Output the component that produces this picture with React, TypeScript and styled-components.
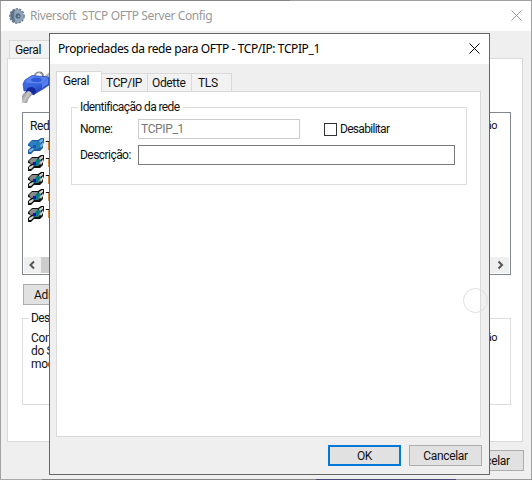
import React from "react";
import styled, { createGlobalStyle } from "styled-components";

const Global = createGlobalStyle`
  * { box-sizing: border-box; }
  html, body { margin: 0; width: 532px; height: 480px; overflow: hidden; background: #efefef; }
`;

const Window = styled.div`
  position: relative;
  width: 532px;
  height: 480px;
  overflow: hidden;
  border: 1px solid transparent;
  background:
    linear-gradient(#efefef, #efefef) padding-box,
    linear-gradient(90deg, #aaa 42px, #858585 42px, #858585 316px, #4a4878 316px, #4a4878 456px, #999 456px) 0 100% / 100% 1px no-repeat border-box,
    linear-gradient(90deg, #858585 290px, #a0a0a0 290px) 0 0 / 100% 1px no-repeat border-box,
    linear-gradient(#a3a3a3, #a3a3a3) border-box;
  color: #111;
  font: 12px/14px Roboto, sans-serif;
  letter-spacing: -0.35px;
  white-space: nowrap;
`;

const TitleBar = styled.header<{ $inactive?: boolean }>`
  display: flex;
  align-items: center;
  height: 30px;
  padding: 0 9px 0 8px;
  background: #fff;
  color: ${(p) => (p.$inactive ? "#999" : "#000")};
  font: 12px/16px "Noto Sans", sans-serif;
`;

const Title = styled.span`
  flex: 1;
  white-space: pre;
  letter-spacing: -0.4px;
`;

const AppIcon = styled.svg`
  width: 16px;
  height: 16px;
  margin-right: 5px;
`;

const Cross = styled.svg`
  width: 11px;
  height: 11px;
  margin-bottom: 1px;
`;

const MainBody = styled.div`
  padding: 9px 8px 0 6px;
`;

const TabRow = styled.div`
  display: flex;
  align-items: flex-end;
`;

const MainTab = styled.div`
  width: 60px;
  height: 18px;
  margin-left: 2px;
  padding: 2px 0 0 5px;
  border: 1px solid #d9d9d9;
  border-bottom: 0;
  background: #f2f2f2;
`;

const MainPanel = styled.section`
  height: 384px;
  padding: 12px 11px 0 14px;
  border: 1px solid #d9d9d9;
  background: #fff;
`;

const PlugPicture = styled.svg`
  display: block;
  width: 32px;
  height: 32px;
`;

const ListBox = styled.div`
  display: flex;
  flex-direction: column;
  height: 163px;
  margin-top: 9px;
  border: 1px solid #828790;
`;

const ListHeader = styled.div`
  display: flex;
  justify-content: space-between;
  padding: 6px 13px 4px 7px;
`;

const ListRow = styled.div`
  display: flex;
  align-items: center;
  height: 17px;
  padding-left: 5px;
`;

const RowIcon = styled.svg`
  width: 16px;
  height: 16px;
`;

const RowName = styled.span<{ $selected?: boolean }>`
  height: 17px;
  padding: 2px 2px 0;
  text-indent: -0.5px;
  background: ${(p) => (p.$selected ? "#efefef" : "transparent")};
`;

const NarrowText = styled.span`
  font-size: 11px;
  letter-spacing: -0.5px;
`;

const ScrollBar = styled.div`
  display: flex;
  align-items: center;
  height: 16px;
  margin: auto 1px 1px;
  background: #efefef;
`;

const ScrollArrow = styled.svg`
  width: 17px;
  height: 16px;
`;

const Thumb = styled.div`
  width: 400px;
  height: 16px;
  margin-right: auto;
  background: #cdcdcd;
`;

const Button = styled.button<{ $primary?: boolean }>`
  width: 73px;
  height: 21px;
  padding: 0;
  border: ${(p) => (p.$primary ? "2px solid #0078d7" : "1px solid #adadad")};
  background: #e1e1e1;
  color: #111;
  font: inherit;
  letter-spacing: inherit;
`;

const AddButton = styled(Button)`
  display: block;
  margin: 9px 0 0 1px;
  padding: 0 0 0 10px;
  text-align: left;
`;

const Group = styled.fieldset<{ $height: number }>`
  height: ${(p) => p.$height}px;
  min-width: 0;
  margin: 0;
  padding: 0 8px;
  border: 1px solid #dcdcdc;
`;

const Legend = styled.legend`
  height: 14px;
  margin-left: -2px;
  padding: 0 3px 0 2px;
  letter-spacing: -0.6px;
`;

const DescriptionGroup = styled(Group)`
  margin-top: 6px;
`;

const DescriptionLine = styled.div`
  display: flex;
  justify-content: space-between;
  height: 13px;
  padding-right: 5px;
`;

const DescriptionText = styled.div`
  padding-top: 6px;
`;

const MainFooter = styled.div`
  display: flex;
  justify-content: flex-end;
  padding-top: 8px;
  margin-right: -1px;
`;

const Dialog = styled.div`
  position: absolute;
  left: 48px;
  top: 32px;
  width: 441px;
  height: 442px;
  border: 1px solid #666;
  background: #efefef;
`;

const DialogBody = styled.div`
  padding: 7px 8px 0 6px;
`;

const DialogTabs = styled.div`
  display: flex;
  align-items: flex-end;
  height: 20px;
`;

const Tab = styled.div<{ $width: number; $active?: boolean }>`
  width: ${(p) => p.$width}px;
  height: ${(p) => (p.$active ? 21 : 18)}px;
  margin-bottom: ${(p) => (p.$active ? -1 : 0)}px;
  padding: ${(p) => (p.$active ? "2px 0 0 6px" : "2px 0 0 4px")};
  border: solid #d9d9d9;
  border-width: ${(p) => (p.$active ? "1px 1px 0 1px" : "1px 1px 0 0")};
  background: ${(p) => (p.$active ? "#fff" : "#f2f2f2")};
  z-index: ${(p) => (p.$active ? 1 : 0)};
  &:last-child { padding-left: 6px; }
`;

const DialogPanel = styled.section`
  height: 346px;
  padding: 8px 13px 0 14px;
  border: 1px solid #d9d9d9;
  background: #fff;
`;

const FormRow = styled.div`
  display: flex;
  align-items: center;
  height: 20px;
  margin-bottom: 6px;
`;

const Fields = styled.div`
  padding-top: 5px;
`;

const Label = styled.label`
  width: 58px;
  letter-spacing: -0.55px;
`;

const Input = styled.input<{ $width: number }>`
  width: ${(p) => p.$width}px;
  height: 20px;
  padding: 0 2px;
  border: 1px solid #7a7a7a;
  outline: 0;
  background: #fff;
  font: inherit;
  letter-spacing: inherit;
  &:disabled { border-color: #ccc; color: #777; }
`;

const CheckLabel = styled.label`
  display: flex;
  align-items: center;
  margin-left: 24px;
  gap: 3px;
  letter-spacing: -0.7px;
`;

const CheckBox = styled.input`
  appearance: none;
  width: 13px;
  height: 13px;
  margin: 0;
  border: 1px solid #333;
  background: #fff;
`;

const DialogFooter = styled.div`
  display: flex;
  justify-content: flex-end;
  gap: 8px;
  padding-top: 8px;
  margin-right: -1px;
`;

const Ring = styled.div`
  position: absolute;
  left: 413px;
  top: 254px;
  width: 25px;
  height: 25px;
  border: 1px solid #dfdfe2;
  border-radius: 50%;
`;

const CloseIcon = () => (
  <Cross viewBox="0 0 11 11">
    <path d="M.5 .5l10 10M10.5 .5l-10 10" stroke="currentColor" strokeWidth="1" />
  </Cross>
);

const GearIcon = () => (
  <AppIcon viewBox="0 0 16 16">
    <circle cx="8" cy="8" r="6.8" fill="#6d8299" stroke="#5b6f86" strokeWidth="2" strokeDasharray="2.2 1.2" />
    <circle cx="8" cy="8" r="6.8" fill="#8fa4b8" />
    <path d="M1.500 6q1-4 5-4.500q-3 5 0 13q-5-1-5-8.500" fill="#5d738a" />
    <circle cx="9" cy="8" r="2.500" fill="#4e6075" />
    <circle cx="9.500" cy="8.300" r="1" fill="#9db0c2" />
  </AppIcon>
);

const Plug = () => (
  <PlugPicture viewBox="0 0 32 32">
    <defs>
      <linearGradient id="plug" x1="0" y1="0" x2="0.7" y2="1">
        <stop offset="0" stopColor="#4a74ea" />
        <stop offset=".6" stopColor="#3560dc" />
        <stop offset="1" stopColor="#1c38ae" />
      </linearGradient>
      <linearGradient id="cable" x1="0" y1="0" x2="1" y2=".7">
        <stop offset="0" stopColor="#6d6d6d" />
        <stop offset=".5" stopColor="#c8c8c8" />
        <stop offset="1" stopColor="#666" />
      </linearGradient>
    </defs>
    <path d="M0 25q3-5 7-6l5 4q-5 2-7 9H0z" fill="url(#cable)" />
    <path d="M12 6q2-5 6-4.500 3 .5 3 4.500M22 7l6-5" fill="none" stroke="#8a8a8a" strokeWidth="2" />
    <path d="M13 5q2-3.500 5-3M23 6l4-3.500" fill="none" stroke="#e4e4e4" strokeWidth=".9" />
    <path d="M1 13l2-4 7-4.500L27 6v8l-6 4-5 3-5 3q-2-5-5-5l-4 1z" fill="url(#plug)" stroke="#2346b2" strokeWidth=".7" />
    <path d="M3 10l7-5 16 1.500-6 6L5 12z" fill="#5a83ee" />
    <path d="M20 13l6-6v6l-6 4z" fill="#5580ee" />
    <ellipse cx="14.500" cy="8.800" rx="5.500" ry="2.300" fill="#2f5cd6" />
    <path d="M4 20q1-4 6-4 4 1 4 5l-2 3q-3-4-6-4l-3 2z" fill="#14299a" />
  </PlugPicture>
);

const SmallPlug = ({ selected }: { selected?: boolean }) => {
  const body = selected ? "#2e7fc0" : "#8a8a8a";
  const edge = selected ? "#1c5fa5" : "#111";
  const light = selected ? "#7cb4de" : "#d4d4d4";
  return (
    <RowIcon viewBox="0 0 16 16">
      <path d="M0 6l4-4h6l3-2h3v4l-1 3v3l-3 3H6l-3 3H0v-4l3-3-3-1z" fill={edge} />
      <path d="M1 6l3-3h6L7 8 3 9z" fill={body} />
      <path d="M8 5l4-2 1 4-3 4H6l1-3z" fill={selected ? "#1f82b2" : "#008080"} />
      <path d="M5 7h3v3H5z" fill={selected ? "#1554b8" : "#1010d0"} />
      <path d="M10 11l3-3V5l-2 3z" fill={body} />
      <path d="M1 14v-2l4-2 1 1-3 3zM11 3l3-2h1v2l-3 2zM12 8l3-4v3l-2 3z" fill={light} />
    </RowIcon>
  );
};

const rows = ["TCPIP_1", "TCPIP_2", "TCPIP_3", "TCPIP_4", "TCPIP_5"];

const tabs = [
  { name: "Geral", width: 46, active: true },
  { name: "TCP/IP", width: 46 },
  { name: "Odette", width: 44 },
  { name: "TLS", width: 40 },
];

function PropertiesDialog() {
  return (
    <Dialog>
      <TitleBar>
        <Title>Propriedades da rede para OFTP - TCP/IP: TCPIP_1</Title>
        <CloseIcon />
      </TitleBar>
      <DialogBody>
        <DialogTabs>
          {tabs.map((t) => (
            <Tab key={t.name} $width={t.width} $active={t.active}>{t.name}</Tab>
          ))}
        </DialogTabs>
        <DialogPanel>
          <Group $height={85}>
            <Legend>Identificação da rede</Legend>
            <Fields>
              <FormRow>
                <Label>Nome:</Label>
                <Input $width={162} defaultValue="TCPIP_1" disabled />
                <CheckLabel><CheckBox type="checkbox" />Desabilitar</CheckLabel>
              </FormRow>
              <FormRow>
                <Label>Descrição:</Label>
                <Input $width={317} />
              </FormRow>
            </Fields>
          </Group>
        </DialogPanel>
        <DialogFooter>
          <Button $primary>OK</Button>
          <Button>Cancelar</Button>
        </DialogFooter>
      </DialogBody>
      <Ring />
    </Dialog>
  );
}

export default function App() {
  return (
    <>
      <Global />
      <Window>
        <TitleBar $inactive>
          <GearIcon />
          <Title>{"Riversoft  STCP OFTP Server Config"}</Title>
          <CloseIcon />
        </TitleBar>
        <MainBody>
          <TabRow><MainTab>Geral</MainTab></TabRow>
          <MainPanel>
            <Plug />
            <ListBox>
              <ListHeader><span>Rede</span><NarrowText>Descrição</NarrowText></ListHeader>
              {rows.map((name, i) => (
                <ListRow key={name}>
                  <SmallPlug selected={i === 0} />
                  <RowName $selected={i === 0}>{name}</RowName>
                </ListRow>
              ))}
              <ScrollBar>
                <ScrollArrow viewBox="0 0 17 16"><path d="M10 4.500L6.500 8l3.500 3.500" fill="none" stroke="#555" strokeWidth="2" /></ScrollArrow>
                <Thumb />
                <ScrollArrow viewBox="0 0 17 16"><path d="M6.500 4.500L10 8l-3.500 3.500" fill="none" stroke="#555" strokeWidth="2" /></ScrollArrow>
              </ScrollBar>
            </ListBox>
            <AddButton>Adicionar</AddButton>
            <DescriptionGroup $height={94}>
              <Legend>Descrição</Legend>
              <DescriptionText>
                <DescriptionLine><span>Configuração</span><NarrowText>conexão</NarrowText></DescriptionLine>
                <DescriptionLine>do Servidor</DescriptionLine>
                <DescriptionLine>modo</DescriptionLine>
              </DescriptionText>
            </DescriptionGroup>
          </MainPanel>
          <MainFooter><Button>Cancelar</Button></MainFooter>
        </MainBody>
        <PropertiesDialog />
      </Window>
    </>
  );
}
